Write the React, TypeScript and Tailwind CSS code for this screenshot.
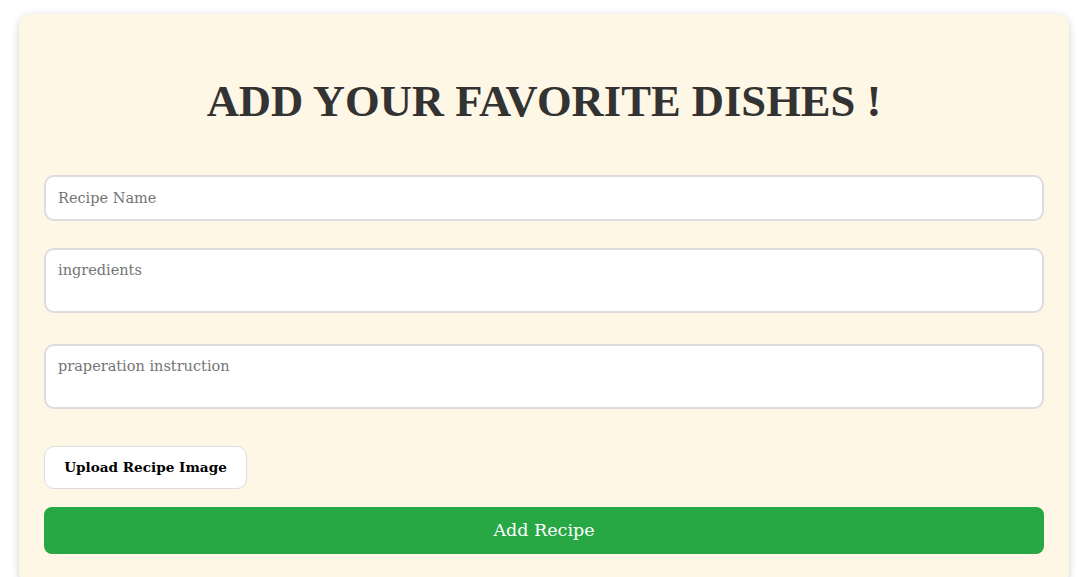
import React from "react";

const serif = { fontFamily: '"DejaVu Serif", "Liberation Serif", serif' };

export default function App() {
  return (
    <div className="min-h-screen bg-white pt-[14px] px-[19px] pr-[16px]">
      {/* card */}
      <div
        className="bg-[#fff7e6] rounded-xl shadow-[0_2px_8px_rgba(0,0,0,0.18)] px-[25px] pt-[62px] pb-[30px]"
        style={serif}
      >
        <h1 className="text-center text-[#333] font-bold text-[44.6px] leading-[50px] mb-[49px] font-['Liberation_Serif',serif]">
          ADD YOUR FAVORITE DISHES !
        </h1>
        <form className="flex flex-col" onSubmit={(e) => e.preventDefault()}>
          <input
            type="text"
            placeholder="Recipe Name"
            className="h-[46px] w-full rounded-[10px] border-2 border-[#ddd] bg-white px-[12px] text-[14.5px] placeholder:text-[#757575] outline-none"
          />
          <textarea
            placeholder="ingredients"
            className="mt-[27px] h-[65px] w-full resize-none rounded-[10px] border-2 border-[#ddd] bg-white px-[12px] py-[10px] text-[14.5px] placeholder:text-[#757575] outline-none"
          />
          <textarea
            placeholder="praperation instruction"
            className="mt-[31px] h-[65px] w-full resize-none rounded-[10px] border-2 border-[#ddd] bg-white px-[12px] py-[10px] text-[14.5px] placeholder:text-[#757575] outline-none"
          />
          <div className="mt-[37px]">
            <button
              type="button"
              className="h-[43px] w-[203px] rounded-[10px] border border-[#ddd] bg-white text-[13.6px] font-bold text-black"
            >
              Upload Recipe Image
            </button>
          </div>
          <button
            type="submit"
            className="mt-[18px] h-[47px] w-full rounded-[8px] bg-[#28a745] text-[17.5px] text-white"
          >
            Add Recipe
          </button>
        </form>
      </div>
    </div>
  );
}
